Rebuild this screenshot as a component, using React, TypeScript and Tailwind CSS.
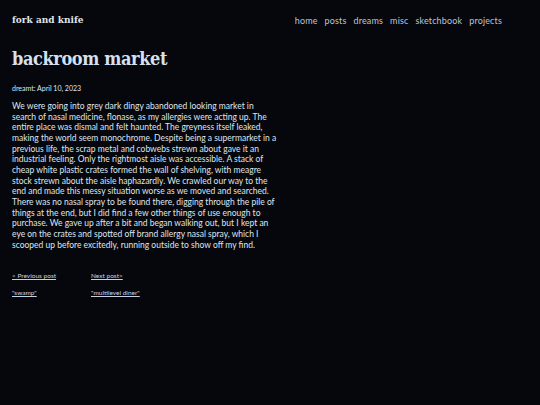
export default function App() {
  const lines = [
    "We were going into grey dark dingy abandoned looking market in",
    "search of nasal medicine, flonase, as my allergies were acting up. The",
    "entire place was dismal and felt haunted. The greyness itself leaked,",
    "making the world seem monochrome. Despite being a supermarket in a",
    "previous life, the scrap metal and cobwebs strewn about gave it an",
    "industrial feeling. Only the rightmost aisle was accessible. A stack of",
    "cheap white plastic crates formed the wall of shelving, with meagre",
    "stock strewn about the aisle haphazardly. We crawled our way to the",
    "end and made this messy situation worse as we moved and searched.",
    "There was no nasal spray to be found there, digging through the pile of",
    "things at the end, but I did find a few other things of use enough to",
    "purchase. We gave up after a bit and began walking out, but I kept an",
    "eye on the crates and spotted off brand allergy nasal spray, which I",
    "scooped up before excitedly, running outside to show off my find.",
  ];

  return (
    <div className="min-h-[405px] w-full bg-[#06070c] text-[#dfe5ef] font-['Lato',sans-serif]">
      <header className="flex items-center justify-between pl-3 pr-[38px] pt-[14px]">
        <a className="text-[9px] font-bold text-[#dfe5ef] font-['DejaVu_Serif',serif]">fork and knife</a>
        <nav className="flex gap-[7px] text-[9px] tracking-[0.15px] text-[#b9c5dd]">
          <a>home</a>
          <a>posts</a>
          <a>dreams</a>
          <a>misc</a>
          <a>sketchbook</a>
          <a>projects</a>
        </nav>
      </header>

      <main className="px-3">
        <h1 className="mt-[22px] text-[18px] font-bold leading-none tracking-[-0.4px] text-[#d6e0f0] font-['DejaVu_Serif_Condensed','DejaVu_Serif',serif]">
          backroom market
        </h1>
        <p className="mt-[15px] text-[7px] text-[#dfe5ef]">dreamt: April 10, 2023</p>
        <p className="mt-[8px] text-[8.5px] leading-[10.65px] whitespace-nowrap">
          {lines.map((l, i) => (
            <span key={i} className="block">
              {l}
            </span>
          ))}
        </p>

        <div className="mt-[21px] grid grid-cols-[79px_auto] gap-y-[7px] text-[6.5px] text-[#c8d0e0]">
          <a className="underline">&lt; Previous post</a>
          <a className="underline">Next post&gt;</a>
          <a className="underline">"swamp"</a>
          <a className="underline">"multilevel diner"</a>
        </div>
      </main>
    </div>
  );
}
